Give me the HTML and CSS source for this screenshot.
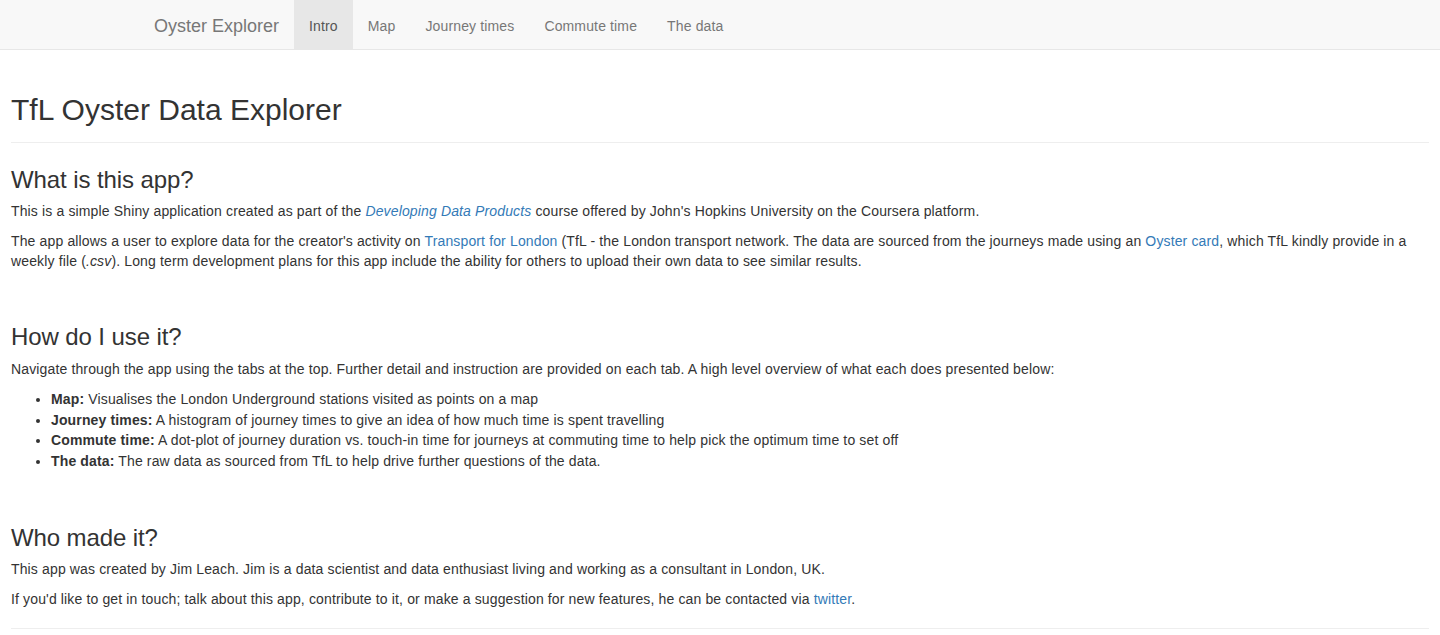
FILE: index.html
```html
<!DOCTYPE html>
<html lang="en">
<head>
<meta charset="utf-8">
<title>Oyster Explorer</title>
<link rel="stylesheet" href="styles.css">
</head>
<body>
<nav class="navbar">
  <div class="nav-container">
    <span class="brand">Oyster Explorer</span>
    <ul class="nav-tabs">
      <li class="tab active"><a href="#">Intro</a></li>
      <li class="tab"><a href="#">Map</a></li>
      <li class="tab"><a href="#">Journey times</a></li>
      <li class="tab"><a href="#">Commute time</a></li>
      <li class="tab"><a href="#">The data</a></li>
    </ul>
  </div>
</nav>
<main class="content">
  <h2 class="page-title">TfL Oyster Data Explorer</h2>
  <hr class="rule-top">
  <section class="section">
    <h3 class="section-title">What is this app?</h3>
    <p>This is a simple Shiny application created as part of the <a href="#"><em>Developing Data Products</em></a> course offered by John's Hopkins University on the Coursera platform.</p>
    <p>The app allows a user to explore data for the creator's activity on <a href="#">Transport for London</a> (TfL - the London transport network. The data are sourced from the journeys made using an <a href="#">Oyster card</a>, which TfL kindly provide in a weekly file (<em>.csv</em>). Long term development plans for this app include the ability for others to upload their own data to see similar results.</p>
  </section>
  <section class="section">
    <h3 class="section-title">How do I use it?</h3>
    <p>Navigate through the app using the tabs at the top. Further detail and instruction are provided on each tab. A high level overview of what each does presented below:</p>
    <ul class="features">
      <li><strong>Map:</strong> Visualises the London Underground stations visited as points on a map</li>
      <li><strong>Journey times:</strong> A histogram of journey times to give an idea of how much time is spent travelling</li>
      <li><strong>Commute time:</strong> A dot-plot of journey duration vs. touch-in time for journeys at commuting time to help pick the optimum time to set off</li>
      <li><strong>The data:</strong> The raw data as sourced from TfL to help drive further questions of the data.</li>
    </ul>
  </section>
  <section class="section">
    <h3 class="section-title">Who made it?</h3>
    <p>This app was created by Jim Leach. Jim is a data scientist and data enthusiast living and working as a consultant in London, UK.</p>
    <p>If you'd like to get in touch; talk about this app, contribute to it, or make a suggestion for new features, he can be contacted via <a href="#">twitter</a>.</p>
  </section>
  <hr class="rule-bottom">
</main>
</body>
</html>
```

FILE: styles.css
```css
html, body {
  margin: 0;
  padding: 0;
}
body {
  font-family: "Liberation Sans", Arial, Helvetica, sans-serif;
  font-size: 14px;
  line-height: 20px;
  letter-spacing: 0.14px;
  color: #333;
  background: #fff;
}
a {
  color: #337ab7;
  text-decoration: none;
}
.navbar {
  background: #f8f8f8;
  border-bottom: 1px solid #e7e7e7;
  height: 49px;
}
.nav-container {
  width: 1162px;
  margin: 0 auto;
  display: flex;
  height: 49px;
}
.brand {
  font-size: 18px;
  line-height: 20px;
  letter-spacing: 0;
  padding: 16px 15px 13px;
  color: #777;
}
.nav-tabs {
  list-style: none;
  margin: 0;
  padding: 0;
  display: flex;
}
.tab a {
  display: block;
  padding: 16px 15px 13px;
  line-height: 20px;
  color: #777;
}
.tab.active a {
  background: #e7e7e7;
  color: #555;
}
.content {
  padding: 0 11px;
}
.page-title {
  font-size: 30px;
  line-height: 33px;
  font-weight: 500;
  letter-spacing: 0;
  margin: 43px 0 0;
}
hr {
  border: 0;
  border-top: 1px solid #eee;
  margin: 0;
}
.rule-top {
  margin: 16px 0 22px;
}
.rule-bottom {
  margin-top: 19px;
}
.section + .section {
  margin-top: 51px;
}
.section-title {
  font-size: 24px;
  line-height: 26.4px;
  font-weight: 500;
  letter-spacing: -0.1px;
  padding-top: 2px;
  margin: 0 0 8px;
}
p {
  margin: 0 0 10px;
}
.features {
  margin: 0 0 10px;
  padding-left: 40px;
}
.features li {
  line-height: 20.7px;
}
```
